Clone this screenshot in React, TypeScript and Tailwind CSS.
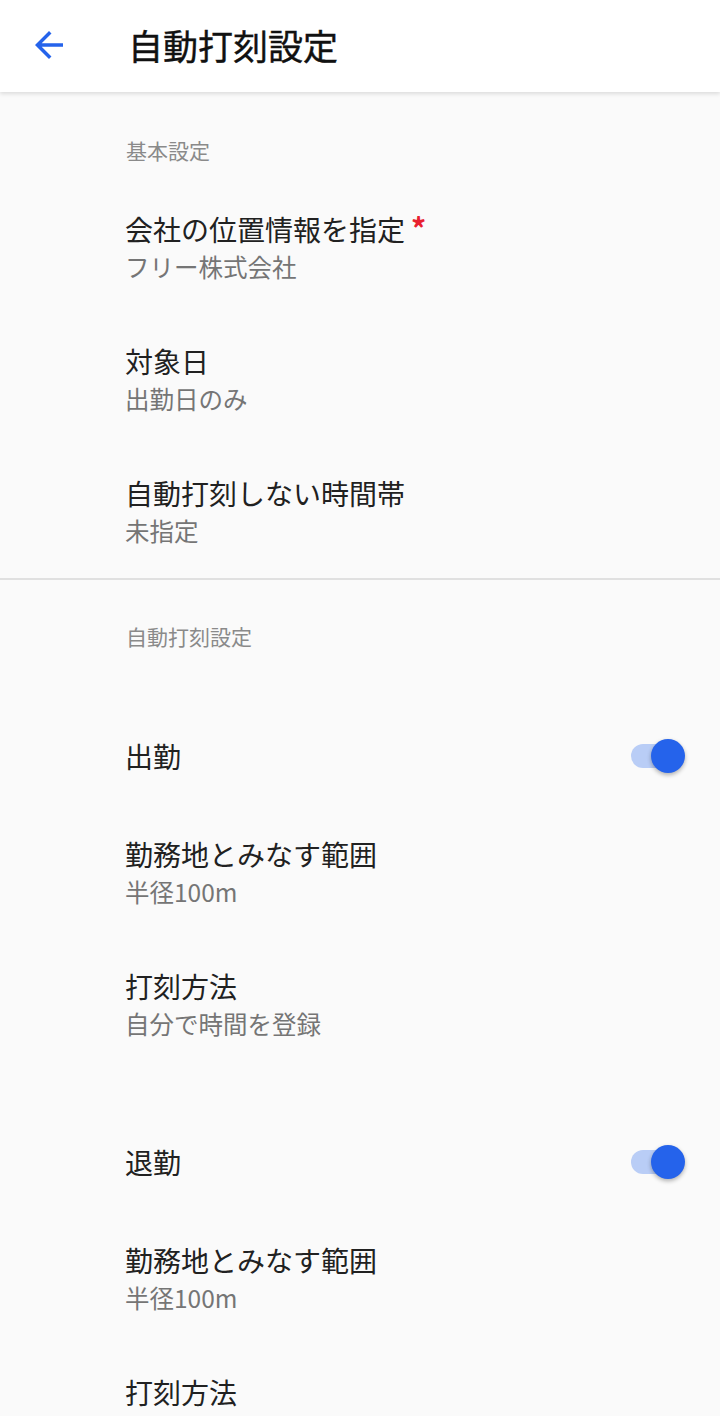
import React from "react";

const font = { fontFamily: '"Noto Sans CJK JP", "Noto Sans", sans-serif' };

function SectionHeader({ label, className = "" }: { label: string; className?: string }) {
  return (
    <div className={`pl-[126px] text-[21px] leading-[28px] text-[#8a8a8a] ${className}`}>{label}</div>
  );
}

function Item({ title, sub, required }: { title: string; sub?: string; required?: boolean }) {
  return (
    <div className="pl-[125px] py-[28px]">
      <div className="flex items-start text-[28px] leading-[38px] text-[#212121]">
        <span>{title}</span>
        {required && (
          <span className="ml-[6px] mt-[2px] text-[30px] leading-[30px] font-bold text-[#e8202f]">*</span>
        )}
      </div>
      {sub && <div className="text-[24.5px] leading-[38px] text-[#757575]">{sub}</div>}
    </div>
  );
}

function ToggleRow({ title }: { title: string }) {
  return (
    <div className="h-[102px] flex items-center justify-between pl-[125px] pr-[35px]">
      <span className="text-[28px] leading-[38px] text-[#212121]">{title}</span>
      <div className="relative w-[54px] h-[34px] flex items-center">
        <div className="w-[52px] h-[24px] rounded-full bg-[#b9cdf6]" />
        <div className="absolute right-0 top-0 w-[34px] h-[34px] rounded-full bg-[#2563eb] shadow-[0_2px_4px_rgba(0,0,0,0.3)]" />
      </div>
    </div>
  );
}

export default function App() {
  return (
    <div className="w-[720px] h-[1416px] overflow-hidden bg-[#fafafa]" style={font}>
      {/* App bar */}
      <header className="relative z-10 h-[92px] bg-white flex items-center shadow-[0_2px_4px_rgba(0,0,0,0.12)]">
        <div className="w-[128px] flex pl-[28px] pb-[2px]">
          <svg width="42" height="42" viewBox="0 0 24 24" fill="#2563eb">
            <path d="M20 11H7.83l5.59-5.59L12 4l-8 8 8 8 1.41-1.41L7.83 13H20v-2z" />
          </svg>
        </div>
        <h1 className="text-[35px] leading-[44px] font-normal text-[#111111] pb-[2px] [-webkit-text-stroke:0.4px_#111111]">
          自動打刻設定
        </h1>
      </header>

      <SectionHeader label="基本設定" className="pt-[44px] pb-[18px]" />
      <Item title="会社の位置情報を指定" sub="フリー株式会社" required />
      <Item title="対象日" sub="出勤日のみ" />
      <Item title="自動打刻しない時間帯" sub="未指定" />

      <div className="h-[2px] bg-[#e0e0e0]" />

      <SectionHeader label="自動打刻設定" className="pt-[42px] pb-[15px]" />

      <div className="pt-[40px]">
        <ToggleRow title="出勤" />
        <Item title="勤務地とみなす範囲" sub="半径100m" />
        <Item title="打刻方法" sub="自分で時間を登録" />
      </div>

      <div className="pt-[40px]">
        <ToggleRow title="退勤" />
        <Item title="勤務地とみなす範囲" sub="半径100m" />
        <Item title="打刻方法" />
      </div>
    </div>
  );
}
